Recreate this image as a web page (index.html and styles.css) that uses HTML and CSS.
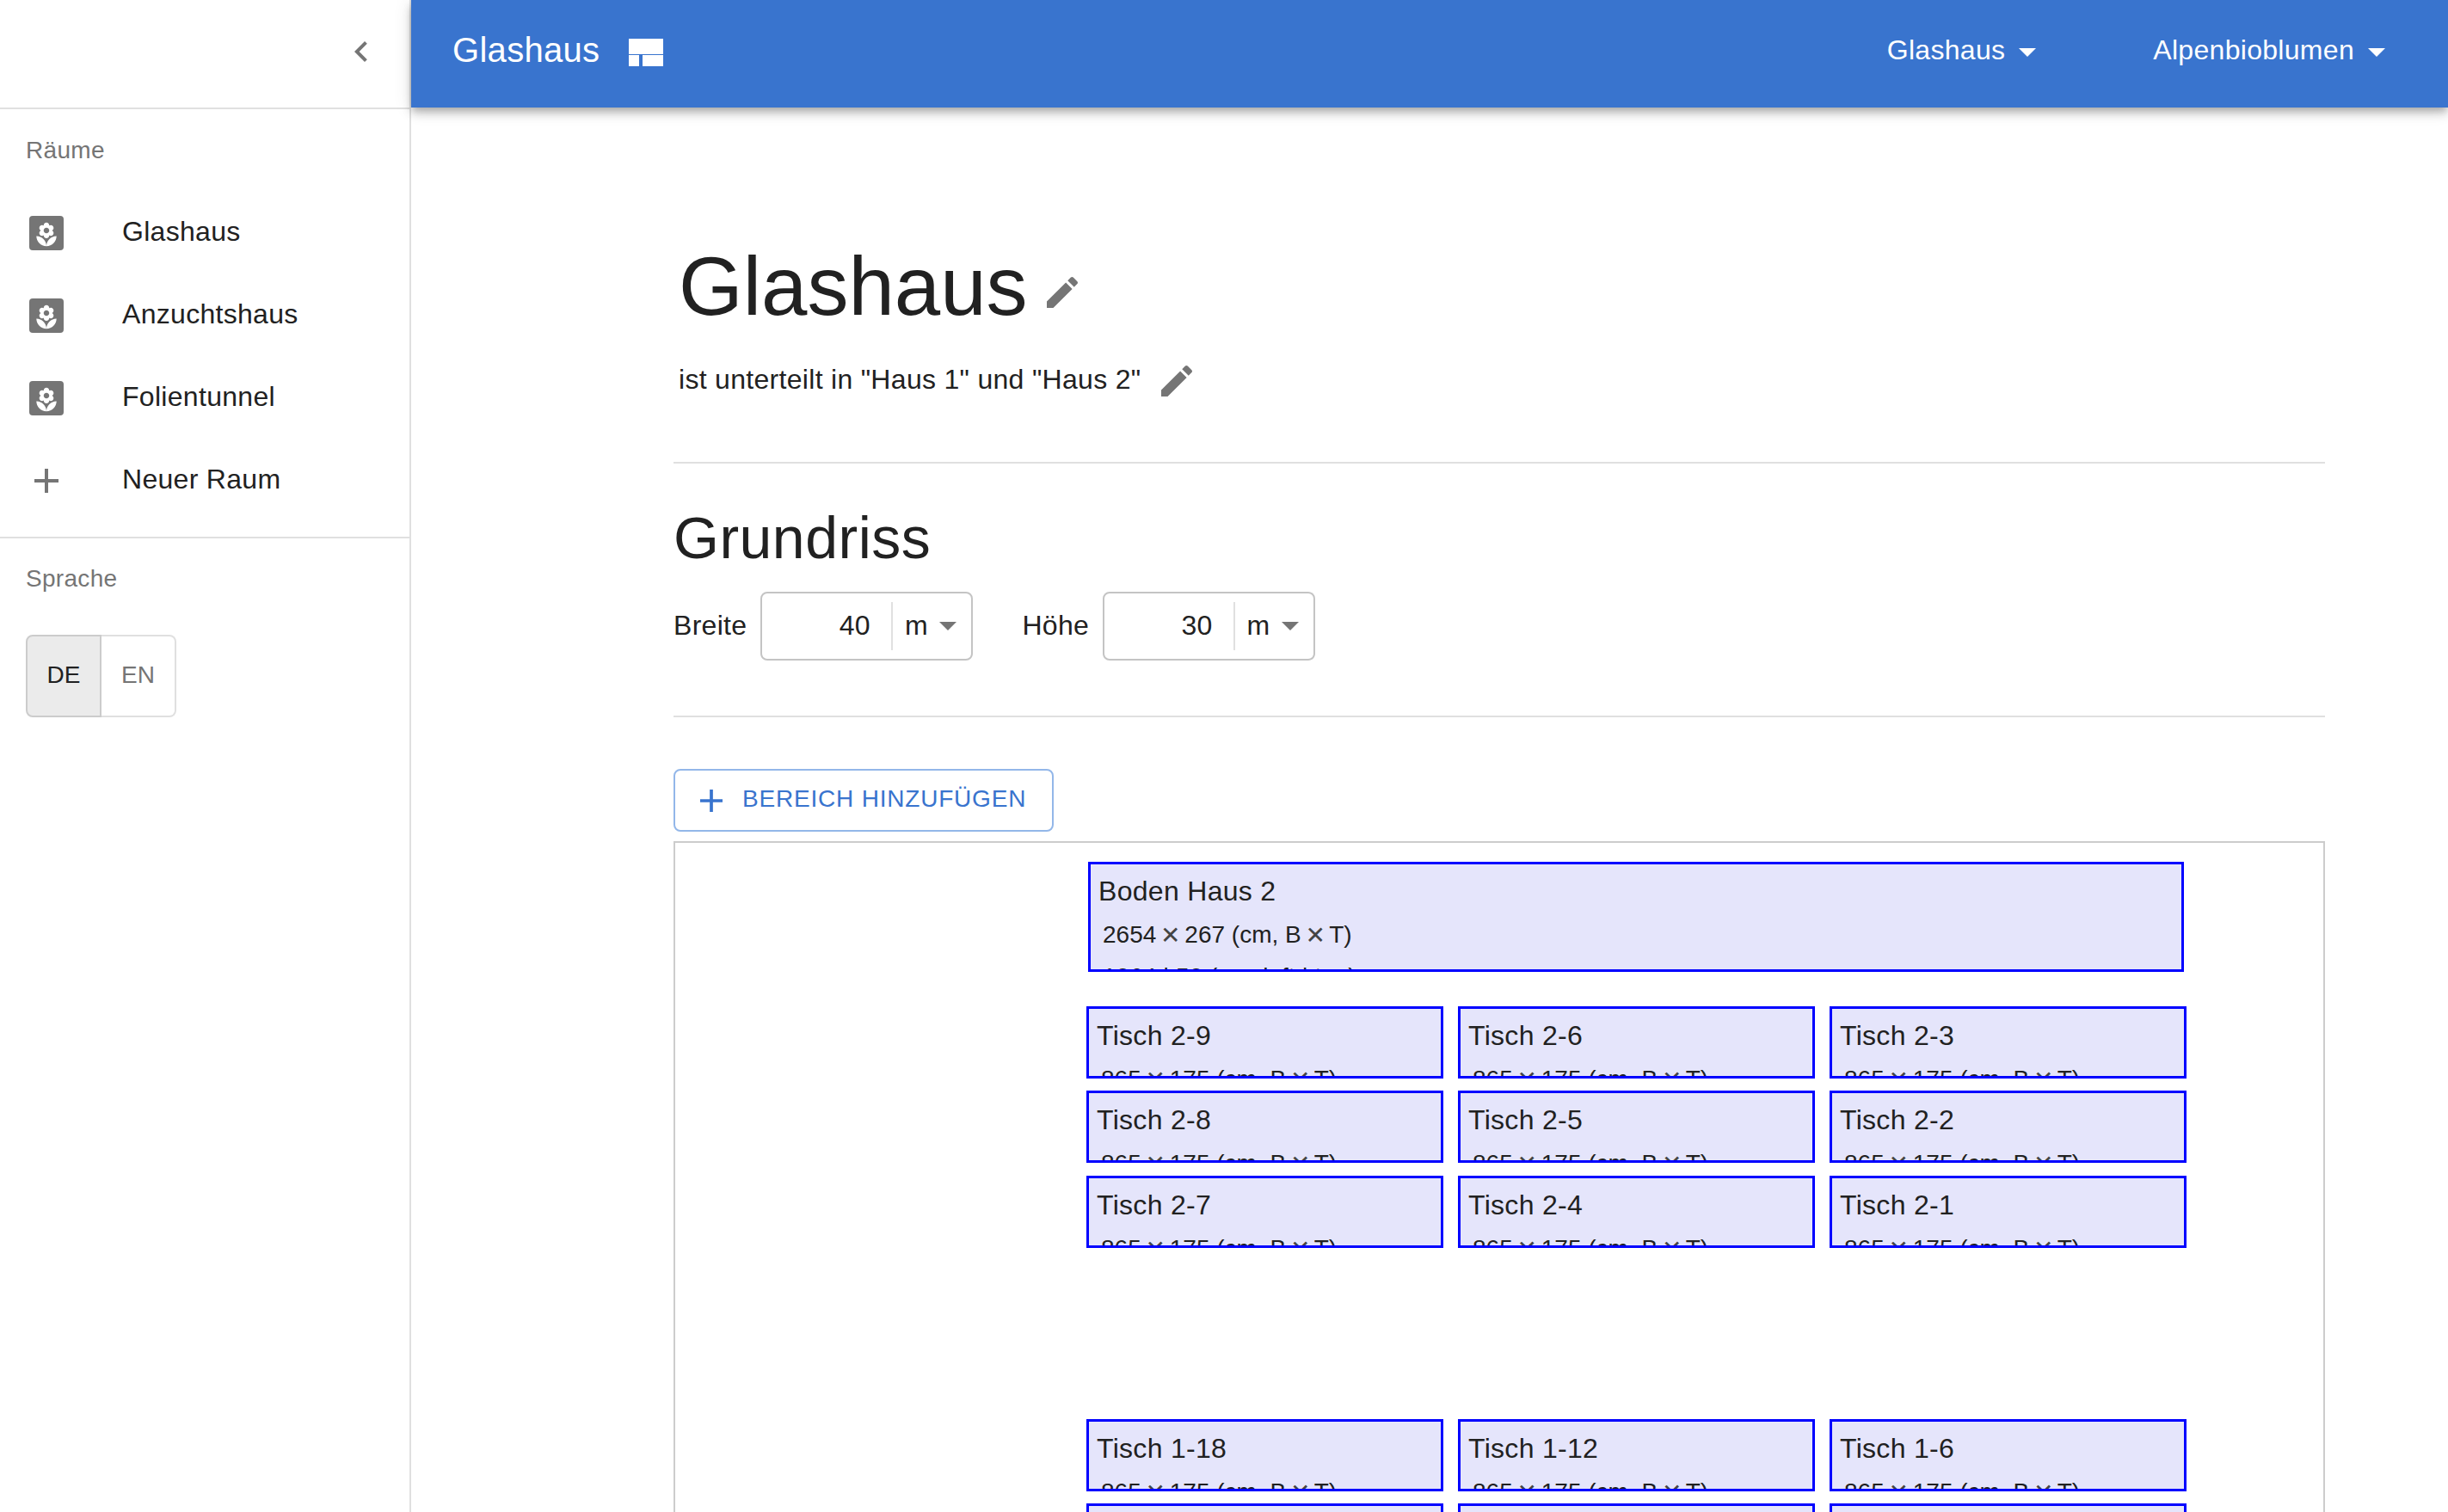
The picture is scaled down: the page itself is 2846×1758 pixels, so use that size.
FILE: index.html
```html
<!DOCTYPE html>
<html lang="de">

<head>
    <meta charset="UTF-8">
    <meta name="viewport" content="width=device-width, initial-scale=1.0">
    <title>Glashaus</title>
    <link rel="stylesheet" href="styles.css">
</head>

<body>
    <div class="app">
        <aside class="sidebar">
            <div class="sidebar-top">
                <svg class="icon collapse-icon" viewBox="0 0 24 24"><path d="M15.41 7.41L14 6l-6 6 6 6 1.41-1.41L10.83 12z"/></svg>
            </div>
            <div class="subheader">Räume</div>
            <ul class="room-list">
                <li class="room-item">
                    <svg class="icon" viewBox="0 0 24 24"><use href="#room-icon"/></svg>
                    <span class="room-name">Glashaus</span>
                </li>
                <li class="room-item">
                    <svg class="icon" viewBox="0 0 24 24"><use href="#room-icon"/></svg>
                    <span class="room-name">Anzuchtshaus</span>
                </li>
                <li class="room-item">
                    <svg class="icon" viewBox="0 0 24 24"><use href="#room-icon"/></svg>
                    <span class="room-name">Folientunnel</span>
                </li>
                <li class="room-item">
                    <svg class="icon" viewBox="0 0 24 24"><path d="M19 13h-6v6h-2v-6H5v-2h6V5h2v6h6v2z"/></svg>
                    <span class="room-name">Neuer Raum</span>
                </li>
            </ul>
            <div class="sidebar-divider"></div>
            <div class="subheader subheader-lang">Sprache</div>
            <div class="lang-toggle">
                <button class="lang-btn lang-active">DE</button>
                <button class="lang-btn">EN</button>
            </div>
        </aside>

        <div class="main">
            <header class="topbar">
                <span class="topbar-title">Glashaus</span>
                <svg class="topbar-icon" viewBox="0 0 40 32"><path d="M0 0h40v18H0zM0 19h12v13H0zM16 19h24v13H16z"/></svg>
                <div class="topbar-menus">
                    <div class="topbar-menu"><span class="topbar-menu-label">Glashaus</span><i class="caret caret-white"></i></div>
                    <div class="topbar-menu"><span class="topbar-menu-label">Alpenbioblumen</span><i class="caret caret-white"></i></div>
                </div>
            </header>

            <main class="content">
                <div class="title-row">
                    <h1>Glashaus</h1>
                    <svg class="icon edit-icon" viewBox="0 0 24 24"><use href="#edit-icon"/></svg>
                </div>
                <div class="desc-row">
                    <span>ist unterteilt in "Haus 1" und "Haus 2"</span>
                    <svg class="icon edit-icon" viewBox="0 0 24 24"><use href="#edit-icon"/></svg>
                </div>
                <hr class="rule rule-first">

                <h2>Grundriss</h2>
                <div class="size-row">
                    <label class="size-label">Breite</label>
                    <div class="size-field">
                        <span class="size-value">40</span>
                        <span class="size-sep"></span>
                        <span class="size-unit">m</span>
                        <i class="caret"></i>
                    </div>
                    <label class="size-label size-label-next">Höhe</label>
                    <div class="size-field">
                        <span class="size-value">30</span>
                        <span class="size-sep"></span>
                        <span class="size-unit">m</span>
                        <i class="caret"></i>
                    </div>
                </div>
                <hr class="rule rule-second">

                <button class="add-btn">
                    <svg class="add-icon" viewBox="5 5 14 14"><path d="M19 13h-6v6h-2v-6H5v-2h6V5h2v6h6v2z"/></svg>
                    <span class="add-label">Bereich hinzufügen</span>
                </button>

                <div class="plan">
                    <div class="area area-floor" style="left: 480px; top: 22px;">
                        <div class="area-name">Boden Haus 2</div>
                        <div class="area-info">2654 <span class="times">✕</span> 267 (cm, B <span class="times">✕</span> T)</div>
                        <div class="area-info">1064 | 50 (cm, left | top)</div>
                    </div>

                    <div class="area" style="left: 478px; top: 190px;"><div class="area-name">Tisch 2-9</div><div class="area-info">865 <span class="times">✕</span> 175 (cm, B <span class="times">✕</span> T)</div></div>
                    <div class="area" style="left: 910px; top: 190px;"><div class="area-name">Tisch 2-6</div><div class="area-info">865 <span class="times">✕</span> 175 (cm, B <span class="times">✕</span> T)</div></div>
                    <div class="area" style="left: 1342px; top: 190px;"><div class="area-name">Tisch 2-3</div><div class="area-info">865 <span class="times">✕</span> 175 (cm, B <span class="times">✕</span> T)</div></div>

                    <div class="area" style="left: 478px; top: 288px;"><div class="area-name">Tisch 2-8</div><div class="area-info">865 <span class="times">✕</span> 175 (cm, B <span class="times">✕</span> T)</div></div>
                    <div class="area" style="left: 910px; top: 288px;"><div class="area-name">Tisch 2-5</div><div class="area-info">865 <span class="times">✕</span> 175 (cm, B <span class="times">✕</span> T)</div></div>
                    <div class="area" style="left: 1342px; top: 288px;"><div class="area-name">Tisch 2-2</div><div class="area-info">865 <span class="times">✕</span> 175 (cm, B <span class="times">✕</span> T)</div></div>

                    <div class="area" style="left: 478px; top: 387px;"><div class="area-name">Tisch 2-7</div><div class="area-info">865 <span class="times">✕</span> 175 (cm, B <span class="times">✕</span> T)</div></div>
                    <div class="area" style="left: 910px; top: 387px;"><div class="area-name">Tisch 2-4</div><div class="area-info">865 <span class="times">✕</span> 175 (cm, B <span class="times">✕</span> T)</div></div>
                    <div class="area" style="left: 1342px; top: 387px;"><div class="area-name">Tisch 2-1</div><div class="area-info">865 <span class="times">✕</span> 175 (cm, B <span class="times">✕</span> T)</div></div>

                    <div class="area" style="left: 478px; top: 670px;"><div class="area-name">Tisch 1-18</div><div class="area-info">865 <span class="times">✕</span> 175 (cm, B <span class="times">✕</span> T)</div></div>
                    <div class="area" style="left: 910px; top: 670px;"><div class="area-name">Tisch 1-12</div><div class="area-info">865 <span class="times">✕</span> 175 (cm, B <span class="times">✕</span> T)</div></div>
                    <div class="area" style="left: 1342px; top: 670px;"><div class="area-name">Tisch 1-6</div><div class="area-info">865 <span class="times">✕</span> 175 (cm, B <span class="times">✕</span> T)</div></div>

                    <div class="area" style="left: 478px; top: 768px;"><div class="area-name">Tisch 1-17</div><div class="area-info">865 <span class="times">✕</span> 175 (cm, B <span class="times">✕</span> T)</div></div>
                    <div class="area" style="left: 910px; top: 768px;"><div class="area-name">Tisch 1-11</div><div class="area-info">865 <span class="times">✕</span> 175 (cm, B <span class="times">✕</span> T)</div></div>
                    <div class="area" style="left: 1342px; top: 768px;"><div class="area-name">Tisch 1-5</div><div class="area-info">865 <span class="times">✕</span> 175 (cm, B <span class="times">✕</span> T)</div></div>
                </div>
            </main>
        </div>
    </div>

    <!-- shared icons -->
    <svg class="icon-defs" xmlns="http://www.w3.org/2000/svg">
        <defs>
            <g id="room-icon">
                <rect x="2" y="2" width="20" height="20" rx="2"/>
                <path fill="#fff" transform="translate(12 12.75) scale(.65) translate(-12 -11.5)" d="M12 22c4.97 0 9-4.03 9-9-4.97 0-9 4.03-9 9zM5.6 10.25c0 1.38 1.12 2.5 2.5 2.5.53 0 1.01-.16 1.42-.44l-.02.19c0 1.38 1.12 2.5 2.5 2.5s2.5-1.12 2.5-2.5l-.02-.19c.4.28.89.44 1.42.44 1.38 0 2.5-1.12 2.5-2.5 0-1-.59-1.85-1.43-2.25.84-.4 1.43-1.25 1.43-2.25 0-1.38-1.12-2.5-2.5-2.5-.53 0-1.01.16-1.42.44l.02-.19C14.5 2.12 13.38 1 12 1S9.5 2.12 9.5 3.5l.02.19c-.4-.28-.89-.44-1.42-.44-1.38 0-2.5 1.12-2.5 2.5 0 1 .59 1.85 1.43 2.25-.84.4-1.43 1.25-1.43 2.25zM12 5.5c1.38 0 2.5 1.12 2.5 2.5s-1.12 2.5-2.5 2.5S9.5 9.38 9.5 8s1.12-2.5 2.5-2.5zM3 13c0 4.97 4.03 9 9 9 0-4.97-4.03-9-9-9z"/>
            </g>
            <path id="edit-icon" d="M3 17.25V21h3.75L17.81 9.94l-3.75-3.75L3 17.25zM20.71 7.04c.39-.39.39-1.02 0-1.41l-2.34-2.34c-.39-.39-1.02-.39-1.41 0l-1.83 1.83 3.75 3.75 1.83-1.83z"/>
        </defs>
    </svg>
</body>

</html>
```

FILE: styles.css
```css
* {
    box-sizing: border-box;
}

html, body {
    height: 100%;
    margin: 0;
    overflow: hidden;
}

body {
    font-family: "Liberation Sans", Arial, sans-serif;
    font-size: 32px;
    letter-spacing: 0.3px;
    color: #212121;
    background: #fff;
}

.app {
    display: flex;
    height: 100vh;
}

.icon {
    display: block;
    flex: none;
    width: 48px;
    height: 48px;
    fill: #757575;
}

.icon-defs {
    position: absolute;
    width: 0;
    height: 0;
}

/* sidebar */
.sidebar {
    flex: none;
    width: 478px;
    border-right: 2px solid #e0e0e0;
}

.sidebar-top {
    display: flex;
    align-items: center;
    justify-content: flex-end;
    height: 127px;
    padding: 0 32px 5px 0;
    border-bottom: 2px solid #e0e0e0;
}

.subheader {
    height: 96px;
    padding-left: 30px;
    font-size: 28px;
    line-height: 96px;
    color: #757575;
}

.subheader-lang {
    line-height: 94px;
}

.room-list {
    margin: 0;
    padding: 0 0 17px;
    list-style: none;
}

.room-item {
    display: flex;
    align-items: center;
    height: 96px;
    padding-left: 30px;
}

.room-name {
    margin-left: 64px;
    padding-bottom: 4px;
}

.sidebar-divider {
    height: 2px;
    background: #e0e0e0;
}

.lang-toggle {
    display: flex;
    width: 175px;
    height: 96px;
    margin: 16px 0 0 30px;
}

.lang-btn {
    width: 87px;
    margin: 0;
    padding: 0 0 3px;
    font: inherit;
    font-size: 28px;
    letter-spacing: 0;
    color: #757575;
    background: #fff;
    border: 2px solid #e0e0e0;
    border-left: 0;
    border-radius: 0 8px 8px 0;
}

.lang-active {
    width: 88px;
    color: #212121;
    background: #ebebeb;
    border: 2px solid #ccc;
    border-radius: 8px 0 0 8px;
}

/* top bar */
.main {
    flex: 1;
    min-width: 0;
    display: flex;
    flex-direction: column;
}

.topbar {
    position: relative;
    z-index: 1;
    flex: none;
    display: flex;
    align-items: center;
    height: 125px;
    padding: 0 73px 3px 48px;
    color: #fff;
    background: #3974ce;
    box-shadow: 0 4px 8px -2px rgba(0, 0, 0, 0.2), 0 8px 10px 0 rgba(0, 0, 0, 0.14), 0 2px 20px 0 rgba(0, 0, 0, 0.12);
}

.topbar-title {
    padding-bottom: 6px;
    font-size: 40px;
}

.topbar-icon {
    width: 40px;
    height: 32px;
    margin-left: 34px;
    fill: #fff;
}

.topbar-menus {
    display: flex;
    gap: 136px;
    margin-left: auto;
}

.topbar-menu {
    display: flex;
    align-items: center;
}

.topbar-menu-label {
    padding-bottom: 5px;
}

.caret {
    display: block;
    width: 0;
    height: 0;
    margin-left: 14px;
    border-top: 10px solid #757575;
    border-left: 10px solid transparent;
    border-right: 10px solid transparent;
}

.caret-white {
    margin-left: 16px;
    border-top-color: #fff;
}

/* content */
.content {
    flex: 1;
    min-height: 0;
    padding: 152px 143px 0 305px;
}

.title-row {
    display: flex;
    align-items: center;
    padding-left: 6px;
}

h1 {
    margin: 0;
    font-size: 96px;
    font-weight: 400;
    line-height: 112px;
    letter-spacing: 0;
}

.edit-icon {
    margin-left: 18px;
}

.title-row .edit-icon {
    margin-top: 14px;
    margin-left: 16px;
}

.desc-row {
    display: flex;
    align-items: center;
    height: 48px;
    margin-top: 28px;
    padding-left: 6px;
}

.desc-row .edit-icon {
    margin-top: 4px;
}

.rule {
    height: 2px;
    margin: 0;
    background: #e0e0e0;
    border: 0;
}

.rule-first {
    margin-top: 72px;
}

.rule-second {
    margin-top: 64px;
}

h2 {
    margin: 46px 0 0;
    font-size: 68px;
    font-weight: 400;
    line-height: 80px;
    letter-spacing: 0.5px;
}

.size-row {
    display: flex;
    align-items: center;
    margin-top: 23px;
}

.size-label {
    margin-right: 16px;
    padding-bottom: 2px;
}

.size-label-next {
    margin-left: 57px;
}

.size-field {
    display: flex;
    align-items: center;
    width: 247px;
    height: 80px;
    border: 2px solid #c4c4c4;
    border-radius: 8px;
}

.size-value {
    width: 125.5px;
    padding-bottom: 2px;
    text-align: right;
}

.size-sep {
    width: 2px;
    height: 56px;
    margin: 0 14px 0 24px;
    background: #e0e0e0;
}

.size-unit {
    width: 26px;
    padding-bottom: 2px;
}

.add-btn {
    display: flex;
    align-items: center;
    width: 442px;
    height: 73px;
    margin: 60px 0 0;
    padding: 0 0 0 29px;
    font: inherit;
    font-size: 28px;
    letter-spacing: 0.8px;
    text-transform: uppercase;
    color: #3974ce;
    background: #fff;
    border: 2px solid #93b7e9;
    border-radius: 8px;
}

.add-icon {
    width: 26px;
    height: 26px;
    margin-right: 23px;
    fill: #3974ce;
}

.add-label {
    padding-bottom: 3px;
}

/* floor plan, areas sit at their stored coordinates */
.plan {
    position: relative;
    height: 1600px;
    margin-top: 11px;
    border: 2px solid #ccc;
}

.area {
    position: absolute;
    width: 415px;
    height: 84px;
    padding: 7px 9px;
    overflow: hidden;
    background: #e5e5fb;
    border: 3px solid #0000ff;
}

.area-floor {
    width: 1274px;
    height: 128px;
}

.area-name {
    line-height: 48px;
}

.area-info {
    height: 48px;
    margin-top: 3px;
    padding-left: 5px;
    font-size: 28px;
    line-height: 48px;
    letter-spacing: 0;
    white-space: nowrap;
}

.area-info + .area-info {
    margin-top: 1px;
}

.times {
    margin: 0 -3px;
    font-family: "DejaVu Sans", sans-serif;
    font-size: 28px;
    line-height: 0;
    color: #444;
    vertical-align: -1px;
}
```
